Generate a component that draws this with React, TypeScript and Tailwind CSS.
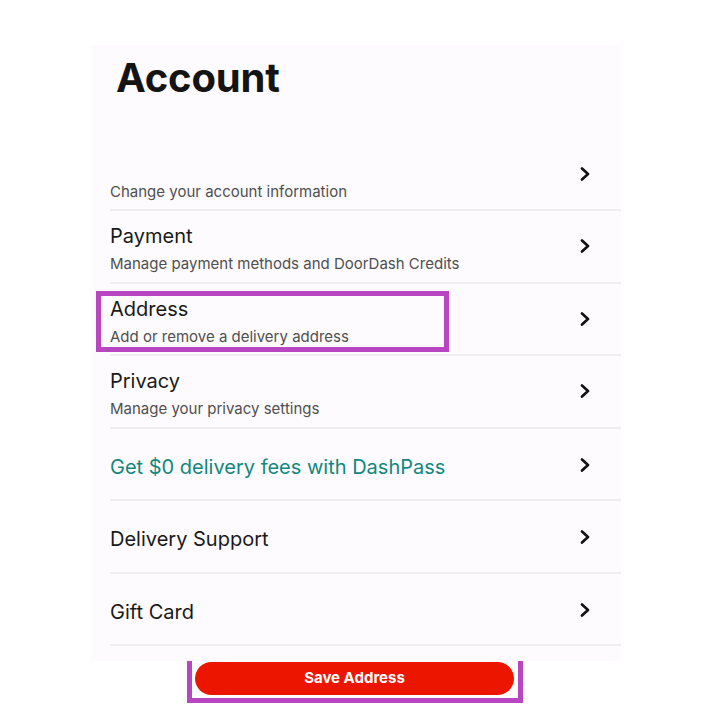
import React from "react";

type Row = {
  title?: string;
  subtitle?: string;
  teal?: boolean;
};

const rows: Row[] = [
  { title: "", subtitle: "Change your account information" },
  { title: "Payment", subtitle: "Manage payment methods and DoorDash Credits" },
  { title: "Address", subtitle: "Add or remove a delivery address" },
  { title: "Privacy", subtitle: "Manage your privacy settings" },
  { title: "Get $0 delivery fees with DashPass", teal: true },
  { title: "Delivery Support" },
  { title: "Gift Card" },
];

const Chevron = () => (
  <svg width="10" height="14" viewBox="0 0 10 14" fill="none" className="shrink-0">
    <polyline
      points="2,1.5 8,7 2,12.5"
      stroke="#111"
      strokeWidth="2.6"
      strokeLinecap="round"
      strokeLinejoin="round"
    />
  </svg>
);

const SettingsRow = ({ row }: { row: Row }) => {
  const twoLine = row.subtitle !== undefined;
  return (
    <div
      className={`flex h-[72.5px] border-b-2 border-[#efedef] pr-[31px] ${
        twoLine ? "items-start" : "items-center"
      }`}
    >
      <div className={`flex-1 ${twoLine ? "pt-[13px]" : "pt-[6px]"}`}>
        {row.title !== undefined && (
          <div
            className={`h-[24px] text-[20px] leading-[24px] ${
              row.teal ? "text-[#10887f]" : "text-[#191919]"
            }`}
          >
            {row.title}
          </div>
        )}
        {twoLine && (
          <div className="mt-[6px] text-[15px] leading-[20px] text-[#4f4f4f]">
            {row.subtitle}
          </div>
        )}
      </div>
      <div className={twoLine ? "self-center" : "pt-[2px]"}>
        <Chevron />
      </div>
    </div>
  );
};

export default function App() {
  return (
    <div
      className="min-h-[709px] w-[710px] bg-white pt-[45px]"
      style={{ fontFamily: "Inter, 'Noto Sans', sans-serif" }}
    >
      <div className="relative ml-[91px] w-[530px] bg-[#fdfbfd] pt-[12.5px] pb-[15px]">
        <h1 className="mb-[41px] pl-[25px] text-[40px] font-bold leading-none tracking-[-0.2px] text-[#141414]">
          Account
        </h1>
        <div className="ml-[19px]">
          {rows.map((r, i) => (
            <SettingsRow key={i} row={r} />
          ))}
        </div>
        <div className="pointer-events-none absolute left-[5px] top-[246px] h-[61px] w-[353px] border-[5px] border-[#b746c0]" />
      </div>
      <div className="mx-auto flex h-[42px] w-[336px] items-start border-x-[5px] border-b-[5px] border-[#b746c0] pl-[3px] pr-[4px]">
        <button className="mt-[1px] flex h-[33px] w-full items-center justify-center rounded-full bg-[#ec1600] text-[15px] font-bold text-white">
          Save Address
        </button>
      </div>
    </div>
  );
}
